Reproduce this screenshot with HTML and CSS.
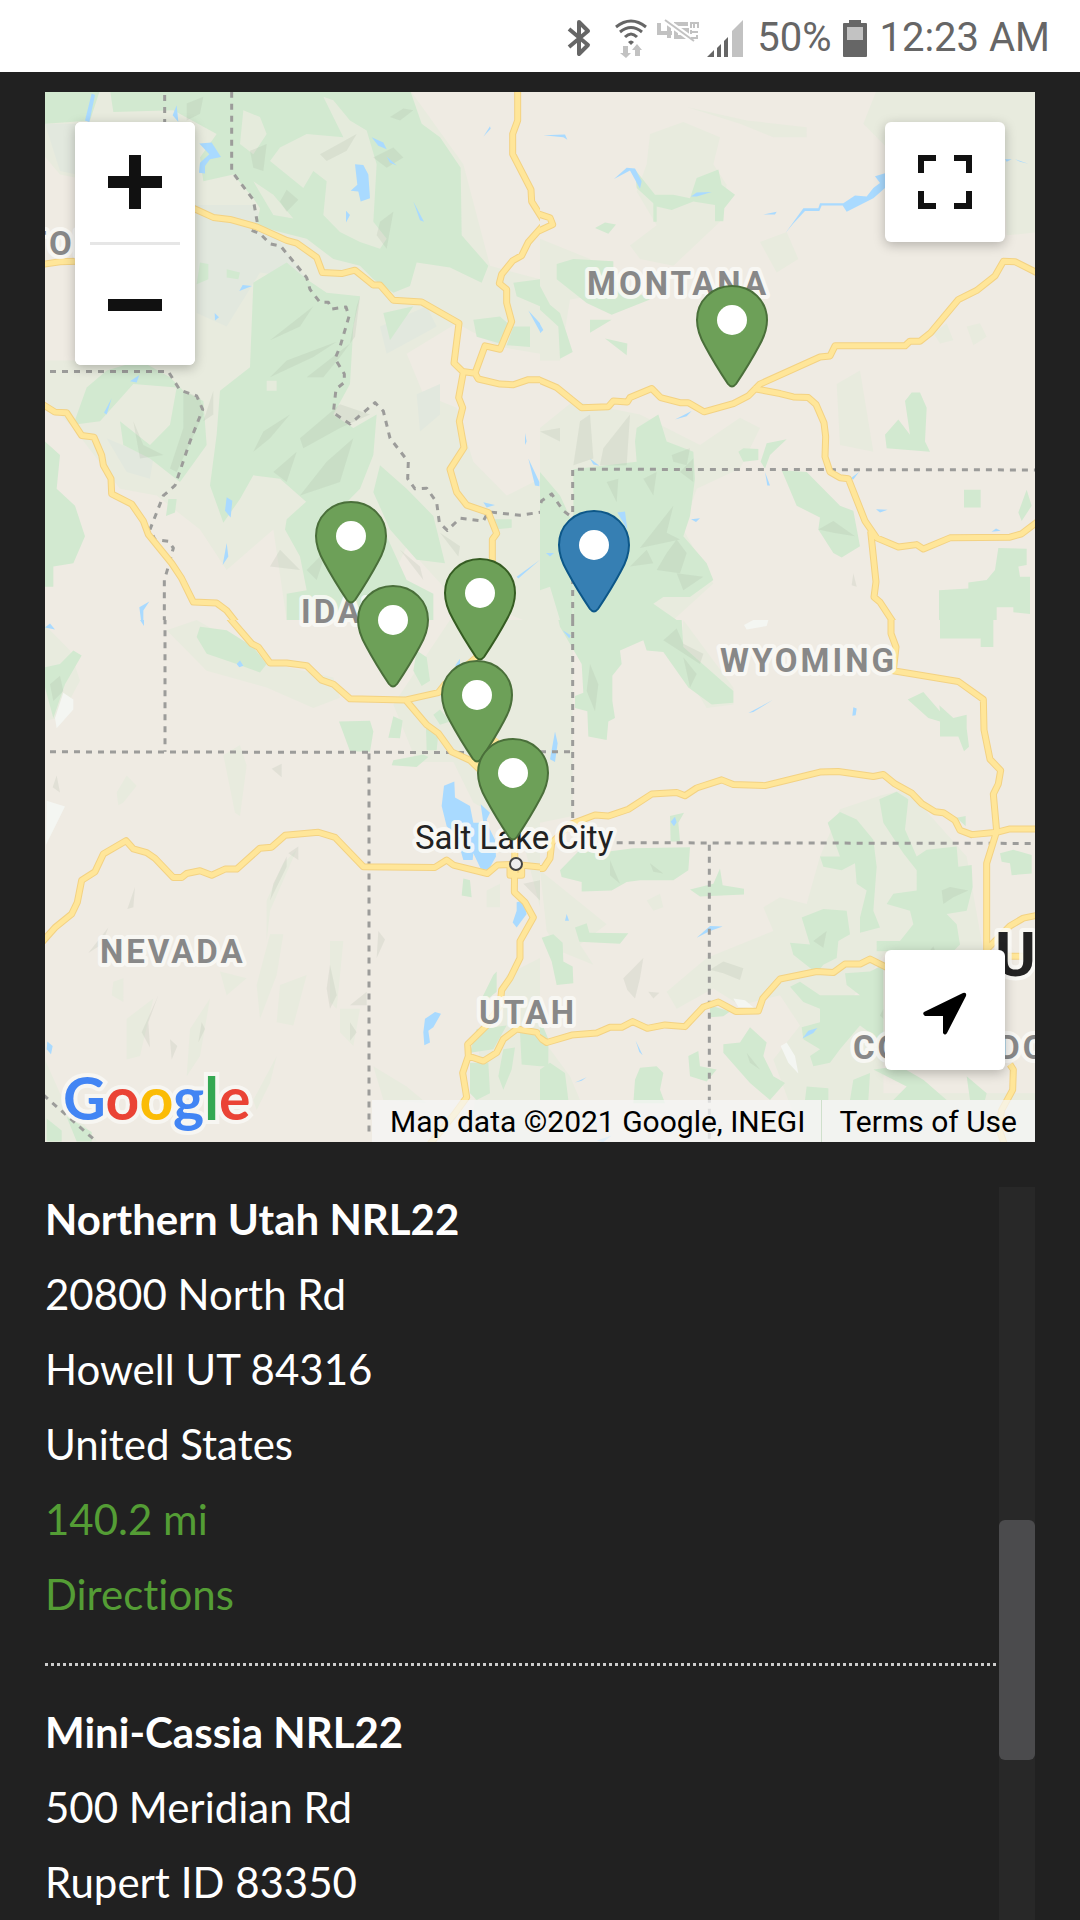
FILE: index.html
```html
<!DOCTYPE html>
<html lang="en">
<head>
<meta charset="utf-8">
<meta name="viewport" content="width=device-width, initial-scale=1">
<title>NRL22 Match Locator</title>
<link rel="stylesheet" href="styles.css">
</head>
<body>
<header class="status">
  <svg class="bluetooth" width="24" height="40" viewBox="0 0 24 40" aria-label="Bluetooth" role="img"><path d="M2 11L21 27L12 36V4L21 13L2 29" fill="none" stroke="#666" stroke-width="4" stroke-linejoin="round"/></svg>
  <svg class="wifi" width="32" height="40" viewBox="0 0 32 40" aria-label="Wi-Fi" role="img"><g fill="none" stroke="#666" stroke-width="3"><path d="M1 9Q16-3 31 9"/><path d="M5 14Q16 5 27 14"/><path d="M10 19Q16 13 22 19"/></g><path d="M13 24Q16 21 19 24L16 27Z" fill="#666"/><path d="M8 28h5v7h3l-5 5-6-5h3zM20 38v-6h-3l5-6 5 6h-2v6z" fill="#c2c2c2"/></svg>
  <svg class="lte" width="42" height="40" viewBox="0 0 42 40" aria-label="4G LTE" role="img"><g fill="none" stroke="#c2c2c2" stroke-width="4"><path d="M2 5v10h13M12 4v16M31 6H19v13h11v-7h-6"/><path d="M8 2l29 21" stroke="#fff" stroke-width="6"/><path d="M8 2l29 21" stroke-width="2"/></g><path d="M34 10V5h7v5M37 5v5M34 14h7M34 12v4M34 20h7M40 20v-3" fill="none" stroke="#c2c2c2" stroke-width="2"/></svg>
  <svg class="signal" width="36" height="38" viewBox="0 0 36 38" aria-label="Signal" role="img"><path d="M0 38l7-7v7zM10 29l4-4v13h-4zM17 22l4-4v20h-4z" fill="#666"/><path d="M25 12L36 1v37H25z" fill="#c2c2c2"/></svg>
  <span class="percent">50%</span>
  <svg class="battery" width="24" height="38" viewBox="0 0 24 38" aria-label="Battery" role="img"><path d="M6 1h12v3h5q1 0 1 1v32q0 1-1 1H1q-1 0-1-1V5q0-1 1-1h5z" fill="#666"/><path d="M4 8h16v13H4z" fill="#c2c2c2"/></svg>
  <time>12:23 AM</time>
</header>
<main class="locator">
  <section class="map" aria-label="Map">
    <svg class="canvas" viewBox="0 0 990 1050" preserveAspectRatio="xMidYMid slice">
      <defs>
        <g id="pin"><path stroke-width="2" d="M36 1C16 1 1 16 1 35C1 46 5 54 9 61C17 76 26 90 32 99Q36 104 40 99C46 90 55 76 63 61C67 54 71 46 71 35C71 16 56 1 36 1Z"/><circle cx="36" cy="35" r="15" fill="#fff" stroke="none"/></g>
        <path id="roads-nw" class="line" d="M460 350L520 377L570 383L650 405L740 445L770 453L830 495L847 540L905 543L945 533L1000 577L1020 577L1060 622L1145 627L1257 690L1242 808L1268 833L1305 838L1315 855L1380 870L1420 872L1465 857L1510 857M1433 0L1433 90L1418 130L1418 190L1473 295L1475 330L1510 385M1510 400L1465 450L1445 490L1418 505L1385 545L1378 572L1400 590L1400 630L1415 685L1380 767L1335 757L1305 838M1270 835L1256 910L1268 940L1258 980L1272 1058L1230 1122L1250 1190L1280 1228L1345 1250L1370 1312L1357 1330V1568M0 925L45 953L80 955L125 1022L162 1027L185 1080L190 1110L213 1150L215 1195L275 1225L310 1275L325 1315L395 1400L425 1445L460 1515L530 1518L560 1540L600 1590M0 517L60 508L110 507"/>
        <path id="roads-ne" class="line" d="M-10 365L30 378L38 398L-10 420M-10 855L50 880L125 940L205 937L220 920L262 923L270 910L335 883L362 910L420 925L445 925L492 952L580 928L625 905L660 870L840 790L870 787L885 757H1095L1110 743H1140L1172 718L1255 620L1310 593L1365 550L1390 507L1425 508L1500 545M640 883L720 898L760 908L805 910L828 930L852 985L857 1025L855 1085L870 1130L900 1147L925 1150L975 1275L1010 1325L1075 1352L1130 1345L1150 1358L1230 1325L1410 1323L1445 1313L1500 1272M992 1305L1008 1455L1002 1500L1020 1515L1060 1575"/>
        <path id="roads-sw" class="line" d="M565-10L635 70L655 80L690 127H740L800 135L845 178L880 190L930 233L1095 237L1195 215L1215 190L1310 110V0M1100 240L1160 310L1195 335L1235 390L1290 415L1400 520L1425 640M1310 430L1370 350M0 960L45 910L95 870L112 835L125 770L165 745L190 692L258 653L280 677L320 688L345 705L400 762H425L440 750L480 742L515 755L555 737H590L660 675L695 672L735 637L835 628L885 643L970 730L1185 732L1220 710L1240 725L1342 750L1372 725L1425 723L1470 728L1510 732M1410 730V755H1445V730M1425 640L1423 805L1455 835L1480 880L1440 950V1000L1410 1060L1385 1095L1380 1140L1340 1200L1283 1255L1285 1290L1268 1340L1280 1412L1245 1460L1170 1550M1285 1290L1330 1305L1370 1280L1390 1240L1430 1210L1490 1220L1510 1245"/>
        <path id="roads-se" class="line" d="M-10 735H10L30 705L35 660L90 605L165 577L205 580L265 560L335 515L410 510L435 520L470 497L545 473L580 487L675 490L840 450L895 448L1000 463L1030 457L1065 485L1115 512L1145 543L1185 567L1210 570L1245 593L1260 622L1295 635L1370 628L1410 618H1500M1053-10V40L1068 80L1060 150L1255 182L1330 235L1332 325L1350 412L1382 445L1375 485L1360 515L1370 625L1340 720V975L1410 905L1450 882L1500 872M1400 995H1450M-10 1230L20 1250L95 1228L170 1222L210 1205H245L278 1188L322 1208L375 1198L435 1203L490 1145L535 1130L587 1158L655 1157L668 1120L720 1062L830 1040L880 1043L915 1018H960L990 1003L1040 1028M1410 1315L1420 1330L1418 1390L1385 1450L1375 1500L1400 1570"/>
      </defs>
      <rect class="land" width="990" height="1050"/>

      <!-- north-west tile -->
      <svg x="-5" y="-2" width="500" height="530" viewBox="0 0 1500 1568" preserveAspectRatio="none">
        <path class="hills" d="M0 0H1110L1270 220L1350 520L1500 560V780L1380 760L1250 690L1100 780L1150 900L1250 940L1300 1100L1400 1200L1500 1150V1568H1450L1220 1480L1100 1350L1000 1568H740L700 1300L560 1420L480 1300L350 1200L240 1180L100 1000L0 900V800H380L460 600V330L60 250L0 180Z"/>
        <path class="haze" d="M15 100L110 100V250L60 240ZM470 340L640 340L800 560L660 540L560 700L470 660ZM200 1030L340 1090L330 1150L260 1130ZM1130 900L1200 870L1200 960L1140 1010ZM1020 700L1160 640L1190 700L1040 780Z"/>
        <path class="forest" d="M15 0H180L150 90L90 95L15 100ZM210 0H1110L1145 100L1200 140L1262 230L1265 430L1345 520L1325 570L1230 525L1130 510L1110 580L1060 600L1000 560L960 520L880 500L800 440L720 420L650 400L660 350L640 320L580 250L490 270L480 200L530 130L400 60L220 65ZM640 570L740 510L800 560L860 600L960 610L940 700L930 870L880 960L940 1000L1010 960L1000 1080L960 1180L890 1250L810 1300L800 1220L720 1150L640 1140L600 1210L550 1280L510 1170L530 1020L540 890L630 820ZM200 830L300 800L390 850L430 890L490 920L500 1050L420 1160L330 1090L250 1050L240 980L330 1050L390 990L410 880L280 870L180 980L100 990L140 880ZM15 1040L60 1080L50 1180L105 1230L135 1320L100 1400L40 1410V1470H15ZM740 1270L830 1190L860 1240L830 1330L1040 1320L1100 1450L1180 1490V1568H740V1490L800 1480L780 1380L735 1300ZM1020 1110L1100 1180L1180 1260L1215 1400L1130 1390L1050 1300L1000 1190ZM1030 660L1120 640L1050 740ZM1300 680L1380 670L1415 700L1380 750L1310 730ZM1420 570L1500 560V640L1430 610ZM1420 700L1470 700V760L1400 755ZM1350 1270L1415 1270V1295L1360 1300ZM480 510L505 515V560L470 575ZM385 1210L410 1210L405 1250L378 1260ZM560 530L600 540L595 560L560 555Z"/>
        <path class="valley" d="M850 20L880 30L930 90L980 120L1010 220L1000 390L1040 440L1020 470L960 450L900 420L850 370L860 270L820 240L790 290L690 210L720 170L800 130L910 140ZM610 60L660 80L680 130L640 190L600 160ZM680 860H710V890H680ZM640 270L700 310L760 380L700 370Z"/>
        <path class="ridge" d="M1050 80L1090 55L1120 60L1080 90ZM630 180L680 160L670 240L640 230ZM720 330L740 295L775 325L740 360ZM840 190L950 130L920 180L860 210ZM1000 200L1060 170L1090 200L1040 230ZM950 640L960 610L945 730L900 790L850 850L800 850L930 750ZM690 740L820 640L780 700ZM740 800L890 745L820 790L690 850ZM670 1010L750 960L690 1030L640 1070ZM780 1030L900 930L990 960L900 1000L790 1060ZM860 1100L940 1030L900 1160L780 1200ZM700 1130L770 1070L740 1160ZM1020 390L1060 360L1040 470L1010 430ZM430 890L480 910L490 960L410 1130L390 1120L430 1000ZM520 890V960L490 980ZM280 980L310 1050L370 1080L300 1090ZM960 1240L1000 1280L950 1300ZM800 1420L860 1360L830 1450ZM440 40L490 20L480 70L440 90ZM720 1360L780 1420L690 1410ZM1080 1360L1140 1410L1150 1450ZM1200 1310L1260 1350L1255 1380Z"/>
        <path class="water" d="M155 10L165 15L148 95L135 90ZM410 45L415 95L398 75ZM478 158L515 155L543 198L510 205L495 225V247L477 245L480 215L508 190ZM945 220L970 222L985 250L990 320L962 330L955 300L932 298L952 280ZM995 140L1030 155L1040 175L1015 165ZM1040 197L1070 223L1050 215ZM1350 107L1352 115L1330 138ZM918 357L930 370L918 392ZM1120 330L1152 390L1140 385ZM598 595L608 577L636 580ZM524 660L537 672L525 682ZM270 862L298 843L290 865ZM215 912L200 960L192 955ZM560 1205L577 1215L572 1265L555 1245ZM560 1340L565 1380L548 1405ZM298 1530L328 1513L310 1540V1568H303ZM1465 652L1500 690V715ZM1455 1015L1460 1040L1455 1050ZM1465 1090L1498 1160V1172L1485 1170ZM1330 1220L1365 1228L1340 1235ZM1430 1440L1500 1390L1435 1445Z"/>
        <path class="border" d="M374 15V100M575 5V240L640 325L655 410M635 415L660 425L690 455L722 462L800 555L810 590L840 628H865L875 648L918 642L927 670L900 760L885 795L913 840V865L888 885L880 955L930 988L1005 925L1030 950L1050 1030L1105 1100L1103 1150L1125 1180L1160 1178L1190 1220L1198 1280L1222 1303L1260 1267L1330 1275L1345 1248L1440 1258L1510 1248M30 833H385L420 888L470 905L488 945L450 1040L405 1170L370 1200L330 1300L345 1330L385 1335L400 1355L385 1410L373 1450V1568"/>
        <use class="casing" href="#roads-nw"/><use class="road" href="#roads-nw"/>
      </svg>

      <!-- north-east tile -->
      <svg x="495" y="-2" width="500" height="530" viewBox="0 0 1500 1568" preserveAspectRatio="none">
        <path class="hills" d="M970 100L1010 0H1500V420L1400 430L1390 200L1040 170ZM330 130L430 95L540 140L520 220L560 280L540 390L400 520L300 500L270 460L350 400L290 300L320 220ZM0 440L150 500L220 600L90 620L60 800H0ZM0 1000L100 920L300 960L480 1050L600 970L660 1000L600 1120L470 1180L430 1300L520 1460L400 1568H0ZM440 50L620 90L800 110V140L700 140L600 100ZM660 450L740 420L775 500L710 540ZM890 870L960 830L1000 1070L900 1050ZM1180 720L1220 690L1240 740L1200 750ZM1280 700L1320 690L1340 730L1300 755Z"/>
        <path class="forest" d="M285 235L345 310L400 310L450 320L470 260L535 235L545 280L585 310L553 350L550 388H525V340L460 330L395 355L350 345V390H340V335L290 290ZM165 408L195 392L228 398L205 425ZM50 515L100 500L220 507V560L330 620L215 665L140 630L50 560ZM0 580L30 635L60 660L80 720L98 775L60 795L55 700L0 650ZM150 680L215 680L150 718ZM195 735L262 750L260 785ZM290 1000L355 960L380 1040L460 1070L465 1150L450 1260L430 1320L500 1400L520 1450L450 1500L370 1500L340 1520L410 1568H100V1122L290 1100L285 1040ZM595 1070L610 1060L655 1062V1095L610 1100ZM680 1045L740 1033L690 1080L675 1120L662 1100ZM725 1125L800 1130L900 1230L940 1245L960 1350L905 1383L880 1370L835 1300L840 1265L770 1230ZM1095 920L1115 895L1140 895L1160 940L1155 1040L1170 1070L1040 1060L1035 1020L1075 975L1110 1020ZM1272 1183H1322V1235H1272ZM1460 1183L1475 1230L1445 1275L1435 1250ZM1375 1355L1460 1357V1405L1435 1410L1440 1440L1470 1440V1550L1420 1545V1530L1370 1530V1568H1197V1480L1285 1475V1457L1340 1450L1365 1420ZM0 1130L60 1200L98 1280V1568H60L30 1470L0 1480Z"/>
        <path class="ridge" d="M0 1010L60 1000V1040ZM100 1110L120 980L150 960L160 1090ZM180 1110L190 1060L270 960L260 1110ZM395 1080L450 1060L440 1110L400 1100ZM300 1355L400 1230L380 1310L420 1330ZM310 1150L350 1130L340 1200ZM420 1130L460 1090V1160ZM200 1160L235 1150L230 1220ZM350 1420L380 1370L410 1330L440 1370L420 1430ZM410 1430L490 1440L430 1480ZM835 1300L880 1275L945 1320L880 1310ZM940 1430L950 1470L935 1465ZM270 1410L320 1360L340 1400Z"/>
        <path class="water" d="M10 134L75 132L82 147L70 140ZM222 263L260 230L285 232L305 270L300 292L270 238ZM453 315L470 303L515 302L470 315ZM670 368L710 360L705 368ZM737 422L790 350L835 350L840 335H910L945 312L980 315L1000 290L1020 275L1005 255L1040 245L1035 290L1000 320L920 360L908 342H845L838 358L795 358L760 395ZM1008 192L1035 200ZM1395 205L1415 205L1400 212ZM1425 205L1465 218L1440 212ZM405 975L455 950L440 965ZM930 1150L957 1130L940 1152ZM150 1090L178 1112L160 1108ZM232 1250L255 1247L262 1300ZM1008 1240L1043 1242L1020 1250ZM1355 1307L1368 1297L1382 1304ZM453 1270L480 1267L468 1278ZM675 1130L690 1170H682ZM905 745L965 748ZM1115 735L1135 732ZM0 692L10 710L0 720ZM18 1370L42 1370L30 1380ZM690 845L725 830Z"/>
        <path class="border" d="M98 1568V1122L1490 1124M-10 1255L5 1215L35 1195L70 1245L98 1265"/>
        <use class="casing" href="#roads-ne"/><use class="road" href="#roads-ne"/>
      </svg>

      <!-- south-west tile -->
      <svg x="-5" y="528" width="500" height="530" viewBox="0 0 1500 1568" preserveAspectRatio="none">
        <path class="hills" d="M0 0L90 90L120 180L60 290L0 300ZM380 30L470 0L700 130L880 170L900 230L820 260L680 200L500 150ZM1060 250L1230 0H1500V850L1440 620L1300 540L1240 420L1130 420ZM230 510L260 460L290 490L250 540L235 548ZM550 400L600 370L620 430L600 580L585 570ZM680 830L730 720L770 680L690 860L680 950ZM690 930H730L710 1050L660 1180L650 1080ZM720 1080L800 1050L760 1200L710 1190ZM870 950L910 950L890 1150L870 1130ZM900 1150L960 1150L940 1260L900 1220ZM260 1180L340 1120L300 1290L260 1300ZM450 1210L510 1120L480 1290L440 1350ZM640 1420L710 1290L690 1370L650 1450ZM1340 800L1380 780V850H1340ZM1000 1320L1100 1380L1160 1430L1030 1420ZM1400 1050L1500 1000V1568H1290L1320 1250ZM540 1040L620 1060L560 1110ZM10 1290L60 1400L170 1540H0ZM220 1070L250 1060V1130L215 1110Z"/>
        <path class="forest" d="M15 140L60 130L100 90L125 105L75 190L40 290L15 200ZM480 20L560 30L640 80L680 130L660 155L590 130L500 100L470 50ZM897 300L990 298L1000 330L990 390L930 388ZM1060 285L1088 297L1080 350L1045 348ZM1180 280L1200 265L1230 300L1200 310ZM1158 320L1195 335L1190 385H1160ZM1060 415L1150 398L1165 405L1130 435L1055 430ZM1270 765L1290 770L1295 820L1265 815ZM1360 1050L1370 1040V1100L1345 1120L1320 1130ZM1310 1210L1400 1200L1360 1270L1290 1280ZM1290 1310L1345 1310L1350 1400L1310 1420L1290 1400ZM1390 1270L1425 1265L1415 1330L1390 1390L1375 1350ZM1440 1220L1500 1220V1320L1445 1315ZM20 1475L65 1510V1543H20ZM80 1470L155 1515V1543H110ZM1130 90L1160 110L1170 180L1145 195L1120 150Z"/>
        <path class="ridge" d="M60 165L70 210L40 240L30 190ZM740 700L740 730L690 830L700 780ZM745 690L775 670V710ZM355 1110L325 1190L330 1265L305 1220ZM285 790L280 850L262 855ZM695 440L725 425V465ZM870 1020L890 1110L870 1150L860 1090ZM1015 920L1035 945L1010 1000ZM930 1140L980 1100V1140ZM205 910L185 960L145 985ZM390 1240L412 1260L395 1300ZM50 460L60 510L38 495ZM1450 780L1500 770V830ZM930 1190L950 1220L930 1245ZM485 1190L495 1210L475 1250Z"/>
        <path class="salt" d="M70 215L100 235V265L50 320L45 290ZM20 535L75 552L18 665Z"/>
        <path class="water" d="M1212 490L1243 478L1245 525L1290 550L1300 600L1340 600L1365 650L1368 700L1345 740L1322 735L1300 690L1298 710H1270L1250 640L1220 610L1205 550ZM1322 545L1350 570L1340 590L1355 640L1330 600ZM1430 835L1450 830L1460 870L1430 910L1418 895L1430 860ZM1155 1180L1185 1160L1203 1165L1180 1205L1165 1215L1170 1250L1153 1258L1150 1220ZM590 130L600 120L610 135L598 140ZM22 1247L38 1260L33 1285L20 1270ZM15 22L30 10L45 28ZM300 0H312V18ZM1245 135L1260 115V135Z"/>
        <path class="border" d="M30 390L1320 392M375-5V390M987 395V1530M10 1405L160 1535"/>
        <use class="casing" href="#roads-sw"/><use class="road" href="#roads-sw"/>
      </svg>

      <!-- south-east tile -->
      <svg x="495" y="528" width="500" height="530" viewBox="0 0 1500 1568" preserveAspectRatio="none">
        <path class="hills" d="M0 0H98V580L0 600ZM0 740L100 820L200 900L120 960L160 1020L60 980L20 920ZM670 850L720 820L800 840L840 700L900 560L1020 520L1100 500L1280 700L1330 980H1040L920 1140H1030V1400H1500V1568H800L700 1300L780 1200L720 1110L600 1140L520 1090L410 1150L380 1100L500 1000L700 920ZM320 830L360 810L370 850L340 860ZM0 1230L90 1350L120 1420H0ZM430 0L580 200L580 250L500 260L420 130Z"/>
        <path class="forest" d="M55 0H425L430 80L580 210L580 245L515 250L445 200L370 95L320 90L310 60L240 90L245 130L217 165V240L225 290L205 300L200 355L145 345L142 270L105 260V225L130 215L125 130L60 20ZM1200 0H1360V80H1322V55H1200ZM1103 235L1150 213L1200 270L1198 252L1240 290L1280 280V320L1287 375L1272 388L1255 345H1200V300L1165 290ZM1018 530L1070 508L1105 530L1095 620L1130 700L1160 680L1250 670L1255 730L1295 725L1298 790L1280 860L1220 870L1250 900L1260 960L1240 980H1010V950L1080 950L1120 900L1110 860L1040 840L1060 810L1130 800V740L1090 690L1030 600ZM390 580L432 570L415 600L420 655H392ZM120 680L165 690L280 675L450 672L445 740L400 770L300 770L260 775L215 800L125 803L125 775L65 760L60 740ZM450 797L520 780L540 735L548 785L612 795V812L480 818ZM105 910L140 897L148 925L265 927L240 958L118 952ZM5 940L40 930L68 955L70 1010L98 1025L100 1075L50 1080L35 1010ZM863 600L900 568L950 590L1000 650L1010 730L1000 860L1020 910L960 925V880L980 800L950 780L945 720L905 740L850 730L840 700L900 700ZM785 880L850 855L920 860L930 930L895 950L890 1000L850 1020L830 1045L760 990L750 955L810 960ZM750 1085L780 1070L840 1110L960 1110L920 1080L915 1045L990 1040L1030 1020V1250L960 1200L900 1270L870 1310L820 1320L810 1290L840 1270L790 1240L785 1205L840 1190V1150L790 1130ZM550 1255L600 1250L630 1205L680 1250L670 1290L700 1350L735 1370L690 1420L630 1370L550 1280ZM445 1290L475 1275L480 1320L530 1330L500 1365L450 1350ZM285 1360L300 1325L350 1320L370 1340L360 1390L375 1430H280ZM0 1180L25 1240V1320H0ZM30 1310L75 1340L85 1420H0V1330ZM510 1140L570 1158L550 1172L510 1175ZM940 1360L990 1340L985 1420H930ZM800 1380L865 1385V1420H795ZM1000 1330L1080 1320L1150 1360L1220 1420H1060L1100 1380ZM1280 1350L1340 1400L1335 1420H1290ZM1380 690L1420 680L1475 695V750L1415 755L1410 720L1385 715ZM1250 585L1277 580V610Z"/>
        <path class="ridge" d="M150 130L175 190L165 270L140 210ZM370 60L410 25L430 70L490 100L480 130ZM430 110L470 160L450 200ZM210 710L240 780L210 755ZM250 1060L310 1000L300 1060L285 1120L262 1095ZM510 1035L550 1010L610 1030L600 1065L550 1045ZM325 1100L358 1103L340 1120ZM375 1155L412 1130ZM1205 800L1230 790L1285 800L1240 820L1210 840ZM820 950L860 920L850 970ZM1160 990L1180 965L1190 990ZM330 720L370 750L340 745ZM1020 1170L1030 1150V1180ZM620 1280L660 1330L630 1310Z"/>
        <path class="salt" d="M580 1120L615 1125L645 1150L595 1145ZM722 1260L740 1250L765 1290L775 1342L745 1310ZM612 15L640 0H685L680 18L620 28Z"/>
        <path class="water" d="M45 330L53 365L45 420L30 412ZM625 275L698 237L640 272ZM940 258L950 262L947 282L937 283ZM68 30L92 45L88 55ZM392 597L405 582L410 598L402 610ZM470 940L510 905L548 907L510 920ZM80 870L87 890H75ZM787 1238L805 1215L832 1207L820 1222ZM287 1245L308 1288L298 1278ZM105 1368L140 1353L125 1363ZM170 1540L215 1525L190 1545Z"/>
        <path class="border" d="M98 0V590M0 390H98M230 659L1480 661M508 665V1540"/>
        <use class="casing" href="#roads-se"/><use class="road" href="#roads-se"/>
      </svg>

      <g class="states">
        <text x="542" y="203">MONTANA</text>
        <text x="-19" y="163">TON</text>
        <text x="256" y="531">IDAHO</text>
        <text x="675" y="580">WYOMING</text>
        <text x="55" y="871">NEVADA</text>
        <text x="434" y="932">UTAH</text>
        <text x="808" y="967">COLORADO</text>
      </g>
      <text class="country" x="950" y="884">UNITED</text>
      <text class="city" x="370" y="757">Salt Lake City</text>
      <circle cx="471" cy="772" r="6" fill="#eee" stroke="#444" stroke-width="2"/>

      <g class="pins">
        <use href="#pin" x="651" y="193"/>
        <use href="#pin" x="270" y="409"/>
        <use href="#pin" x="513" y="418" class="here"/>
        <use href="#pin" x="399" y="466" class="active"/>
        <use href="#pin" x="312" y="493"/>
        <use href="#pin" x="396" y="568"/>
        <use href="#pin" x="432" y="646"/>
      </g>
    </svg>

    <div class="zoom card">
      <button type="button" aria-label="Zoom in"><svg width="54" height="54" viewBox="0 0 54 54"><path d="M21 0h12v21h21v12H33v21H21V33H0V21h21z"/></svg></button>
      <button type="button" aria-label="Zoom out"><svg width="54" height="54" viewBox="0 0 54 54"><path d="M0 21h54v12H0z"/></svg></button>
    </div>
    <button type="button" class="fullscreen card" aria-label="Toggle fullscreen"><svg width="54" height="54" viewBox="0 0 54 54"><path d="M0 0h18v6H6v12H0zM36 0h18v18h-6V6H36zM0 36h6v12h12v6H0zM48 36h6v18H36v-6h12z"/></svg></button>
    <button type="button" class="locate card" aria-label="My location"><svg width="44" height="44" viewBox="0 0 44 44"><path fill="#000" d="M1 20L40 1Q44 0 43 4L24 41Q22 44 20 41V24H2Q-1 22 1 20Z"/></svg></button>

    <a class="google" href="#" aria-label="Google"><span class="blue">G</span><span class="red">o</span><span class="yellow">o</span><span class="blue">g</span><span class="green">l</span><span class="red">e</span></a>
    <div class="credits"><span>Map data ©2021 Google, INEGI</span><a href="#">Terms of Use</a></div>
  </section>

  <section class="results" aria-label="Locations">
    <ul class="stores">
      <li>
        <strong>Northern Utah NRL22</strong>
        <span>20800 North Rd</span>
        <span>Howell UT 84316</span>
        <span>United States</span>
        <span class="distance">140.2 mi</span>
        <a href="#">Directions</a>
      </li>
      <li>
        <strong>Mini-Cassia NRL22</strong>
        <span>500 Meridian Rd</span>
        <span>Rupert ID 83350</span>
      </li>
    </ul>
    <div class="track"><div class="thumb"></div></div>
  </section>
</main>
</body>
</html>
```
FILE: styles.css
```css
* { box-sizing: border-box; }

body {
  margin: 0;
  min-height: 100vh;
  display: flex;
  flex-direction: column;
  background: #212121;
  color: #fff;
  font-family: Lato, sans-serif;
  font-size: 42px;
  font-variant-ligatures: none;
  line-height: 75px;
}

/* Status bar */
.status {
  display: flex;
  align-items: center;
  justify-content: flex-end;
  height: 72px;
  padding: 4px 30px 0 0;
  background: #fff;
  color: #666;
  font-family: Roboto, sans-serif;
  font-size: 40px;
  line-height: 68px;
}
.wifi { margin-left: 24px; }
.lte { margin-left: 10px; }
.signal { margin-left: 8px; }
.percent { margin-left: 14px; }
.battery { margin: 0 12px; }

.locator {
  flex: 1;
  display: flex;
  flex-direction: column;
  padding: 20px 45px 0;
}

/* Map */
.map {
  position: relative;
  aspect-ratio: 990 / 1050;
  overflow: hidden;
  margin-bottom: 40px;
  font-family: Roboto, sans-serif;
}
.canvas { display: block; width: 100%; height: 100%; }
.land { fill: #efebe3; }
.hills { fill: #e8ebde; }
.haze { fill: #e2e8de; }
.forest { fill: #d2e9d0; }
.valley { fill: #e5ebdc; }
.ridge { fill: #9aaa98; fill-opacity: .16; }
.salt { fill: #f4f6f2; }
.water { fill: #a9daff; }
.line, .border { fill: none; vector-effect: non-scaling-stroke; stroke-linejoin: round; }
.border { stroke: #9c9c9a; stroke-width: 3px; stroke-dasharray: 6 6; }
.casing { stroke: #f3d283; stroke-width: 7px; }
.road { stroke: #ffe699; stroke-width: 5px; }

.states, .city, .country {
  stroke: #fafaf7;
  stroke-opacity: .85;
  stroke-width: 8px;
  stroke-linejoin: round;
  paint-order: stroke;
}
.states { fill: #888; font-size: 33px; font-weight: 700; letter-spacing: 3px; }
.city { fill: #222; font-size: 33px; }
.country { fill: #222; font-size: 62px; font-weight: 700; }

.pins { fill: #6da058; stroke: #4a6f3a; }
.active { stroke: #355c22; }
.here { fill: #367fb3; stroke: #0d5788; }

/* Map controls */
button {
  display: grid;
  place-items: center;
  width: 120px;
  height: 120px;
  padding: 0;
  border: 0;
  background: #fff;
  fill: #111;
}
.card {
  position: absolute;
  background: #fff;
  border-radius: 6px;
  box-shadow: 0 3px 12px rgba(0, 0, 0, .25);
}
.zoom { top: 30px; left: 30px; overflow: hidden; }
.zoom button + button { height: 123px; }
.zoom button + button::before {
  content: "";
  width: 90px;
  height: 3px;
  background: #e6e6e6;
}
.zoom button + button { grid-template-rows: 3px 1fr; }
.fullscreen { top: 30px; right: 30px; }
.locate { right: 30px; bottom: 72px; padding-top: 8px; }

.google {
  position: absolute;
  left: 18px;
  bottom: 9px;
  font: 700 59px/70px Lato, sans-serif;
  text-decoration: none;
  -webkit-text-stroke: 8px #f7f6f2;
  paint-order: stroke;
}
.blue { color: #4285f4; }
.red { color: #ea4335; }
.yellow { color: #fbbc05; }
.green { color: #34a853; }

.credits {
  position: absolute;
  right: 0;
  bottom: 0;
  display: flex;
  height: 42px;
  background: rgba(245, 245, 245, .75);
  color: #000;
  font-size: 30px;
  line-height: 44px;
}
.credits span { padding: 0 16px 0 18px; }
.credits a {
  padding: 0 18px 0 17px;
  border-left: 1px solid #cfe0cc;
  color: inherit;
  text-decoration: none;
}

/* Location list */
.results { flex: 1; display: flex; }
.stores { flex: 1; margin: 0; padding: 0; list-style: none; }
.stores li > * { display: block; }
.stores li + li::before {
  content: "";
  display: block;
  height: 3px;
  margin: 31px 0 29px;
  background: repeating-linear-gradient(90deg, #ccc 0 3px, transparent 3px 6px);
}
.stores a, .distance { color: #549d35; text-decoration: none; }
.track {
  width: 36px;
  margin-top: 5px;
  padding-top: 333px;
  background: #282828;
}
.thumb {
  height: 240px;
  border-radius: 6px;
  background: #4b4b4d;
}
```
